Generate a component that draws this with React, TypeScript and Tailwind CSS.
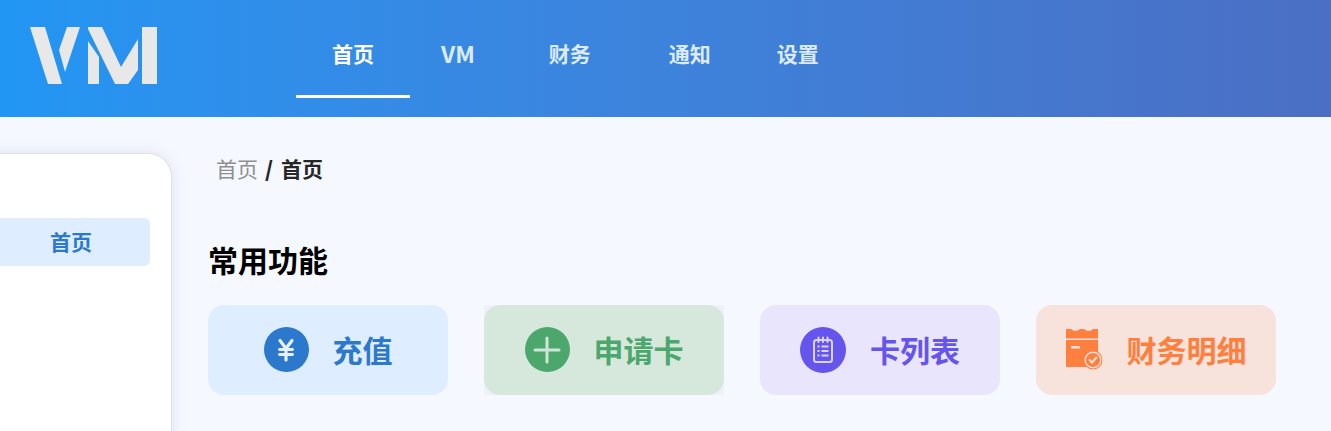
const font = "font-['Microsoft_YaHei','Noto_Sans_CJK_SC','Liberation_Sans',sans-serif]";

const VmLogo = () => (
  <svg width="128" height="58" viewBox="30 27 128 58" className="blur-[0.4px]">
    <g fill="#e8e8e8">
      <path d="M30 27H45L62 84H48Z" />
      <path d="M67 27H80L65 72L59 50Z" />
      <path d="M88 41L99 57V84H88Z" />
      <path d="M88 27H102L121 67L138 39V70L128 84H115L88 29Z" />
      <path d="M142 27H157V84H142Z" />
    </g>
  </svg>
);

const YenIcon = () => (
  <div className="flex h-[45px] w-[45px] items-center justify-center rounded-full bg-[#2b78cc]">
    <svg width="18" height="24" viewBox="0 0 18 24" fill="none" stroke="#e8f1fb" strokeWidth="3.2" strokeLinecap="round">
      <path d="M3 2.5L9 10.5L15 2.5" />
      <path d="M2.5 11.5H15.5" strokeWidth="2.8" />
      <path d="M2.5 16.5H15.5" strokeWidth="2.8" />
      <path d="M9 10.5V22" />
    </svg>
  </div>
);

const PlusIcon = () => (
  <div className="flex h-[45px] w-[45px] items-center justify-center rounded-full bg-[#4ca76c]">
    <svg width="28" height="28" viewBox="0 0 28 28" fill="none" stroke="#cfe6d6" strokeWidth="3" strokeLinecap="round">
      <path d="M14 2V26" />
      <path d="M2 14H26" />
    </svg>
  </div>
);

const NoteIcon = () => (
  <div className="flex h-[46px] w-[46px] items-center justify-center rounded-full bg-[#6655ec]">
    <svg width="22" height="28" viewBox="0 0 22 28" fill="none" stroke="#d9d4fb" strokeWidth="2">
      <rect x="2" y="4" width="18" height="22" rx="2.5" />
      <path d="M6.5 1.5V6M11 1.5V6M15.5 1.5V6" strokeLinecap="round" />
      <path d="M5.5 10.5H7.5M9.5 10.5H16.5M5.5 15H7.5M9.5 15H16.5M5.5 19.5H7.5M9.5 19.5H16.5" strokeWidth="2.2" />
    </svg>
  </div>
);

const LedgerIcon = () => (
  <svg width="37" height="41" viewBox="0 0 37 41">
    <path d="M0 0H5Q7 2 9.5 2T14 0H18Q20 2 22.5 2T27 0H32V9.5H0Z" fill="#ff7f3f" />
    <path d="M0 11H32V38H0Z" fill="#ff7f3f" />
    <rect x="5" y="17" width="9" height="2.5" fill="#f7e3dc" />
    <circle cx="27" cy="31" r="9.5" fill="#ff7f3f" />
    <circle cx="27" cy="31" r="7.8" fill="#ff7f3f" stroke="#f7e3dc" strokeWidth="1.4" />
    <path d="M23.5 31L26 33.5L30.5 28.5" fill="none" stroke="#f7e3dc" strokeWidth="2" strokeLinecap="round" />
  </svg>
);

const shortcuts = [
  { label: "充值", icon: <YenIcon />, box: "bg-[#deedff]", text: "text-[#2b78cc]", corner: "" },
  { label: "申请卡", icon: <PlusIcon />, box: "bg-[#d6e8dc]", text: "text-[#4ca76c]", corner: "bg-[#eef0fa]" },
  { label: "卡列表", icon: <NoteIcon />, box: "bg-[#e9e5fd]", text: "text-[#6655ec]", corner: "" },
  { label: "财务明细", icon: <LedgerIcon />, box: "bg-[#f7e3dc]", text: "text-[#ff7f3f]", corner: "" },
];

const App = () => {
  return (
    <div className={`h-[431px] w-[1331px] overflow-hidden bg-[#f5f8ff] ${font}`}>
      <header className="flex h-[117px] items-start bg-gradient-to-r from-[#2196f3] to-[#4a6fc4]">
        <div className="ml-[30px] mt-[27px] flex">
          <VmLogo />
        </div>
        <nav className="ml-[138px] flex text-[21px] leading-[26px] font-bold text-[#dcebfb]">
          <div className="flex h-[98px] w-[114px] justify-center border-b-[3px] border-white pt-[40px] text-white">首页</div>
          <div className="ml-[31px] pt-[40px] text-[23px]">VM</div>
          <div className="ml-[74px] pt-[40px]">财务</div>
          <div className="ml-[78px] pt-[40px]">通知</div>
          <div className="ml-[66px] pt-[40px]">设置</div>
        </nav>
      </header>
      <div className="flex">
        <aside className="ml-[-28px] mt-[36px] h-[400px] w-[200px] shrink-0 rounded-tr-[24px] border border-[#e2e2e6] bg-white pt-[64px] shadow-[0_0_14px_rgba(120,130,170,0.18)]">
          <div className="ml-[19px] flex h-[48px] w-[158px] items-center justify-center rounded-[6px] bg-[#deedff] text-[21px] font-bold text-[#2b78cc]">
            首页
          </div>
        </aside>
        <main className="ml-[36px] flex-1">
          <div className="ml-[8px] mt-[38px] flex h-[28px] items-center text-[21px]">
            <span className="text-[#8f8f8f]">首页</span>
            <span className="ml-[7px] font-extrabold text-[#262626]">/</span>
            <span className="ml-[8px] font-bold text-[#262626]">首页</span>
          </div>
          <h2 className="mt-[56px] text-[30px] leading-[40px] font-bold text-black">常用功能</h2>
          <div className="mt-[26px] flex gap-[36px]">
            {shortcuts.map((item) => (
              <div key={item.label} className={item.corner}>
                <div className={`flex h-[90px] w-[240px] items-center justify-center gap-[24px] rounded-[16px] pb-[1px] ${item.box}`}>
                  {item.icon}
                  <span className={`pb-[2px] text-[30px] leading-[40px] font-bold ${item.text}`}>{item.label}</span>
                </div>
              </div>
            ))}
          </div>
        </main>
      </div>
    </div>
  );
};

export default App;
